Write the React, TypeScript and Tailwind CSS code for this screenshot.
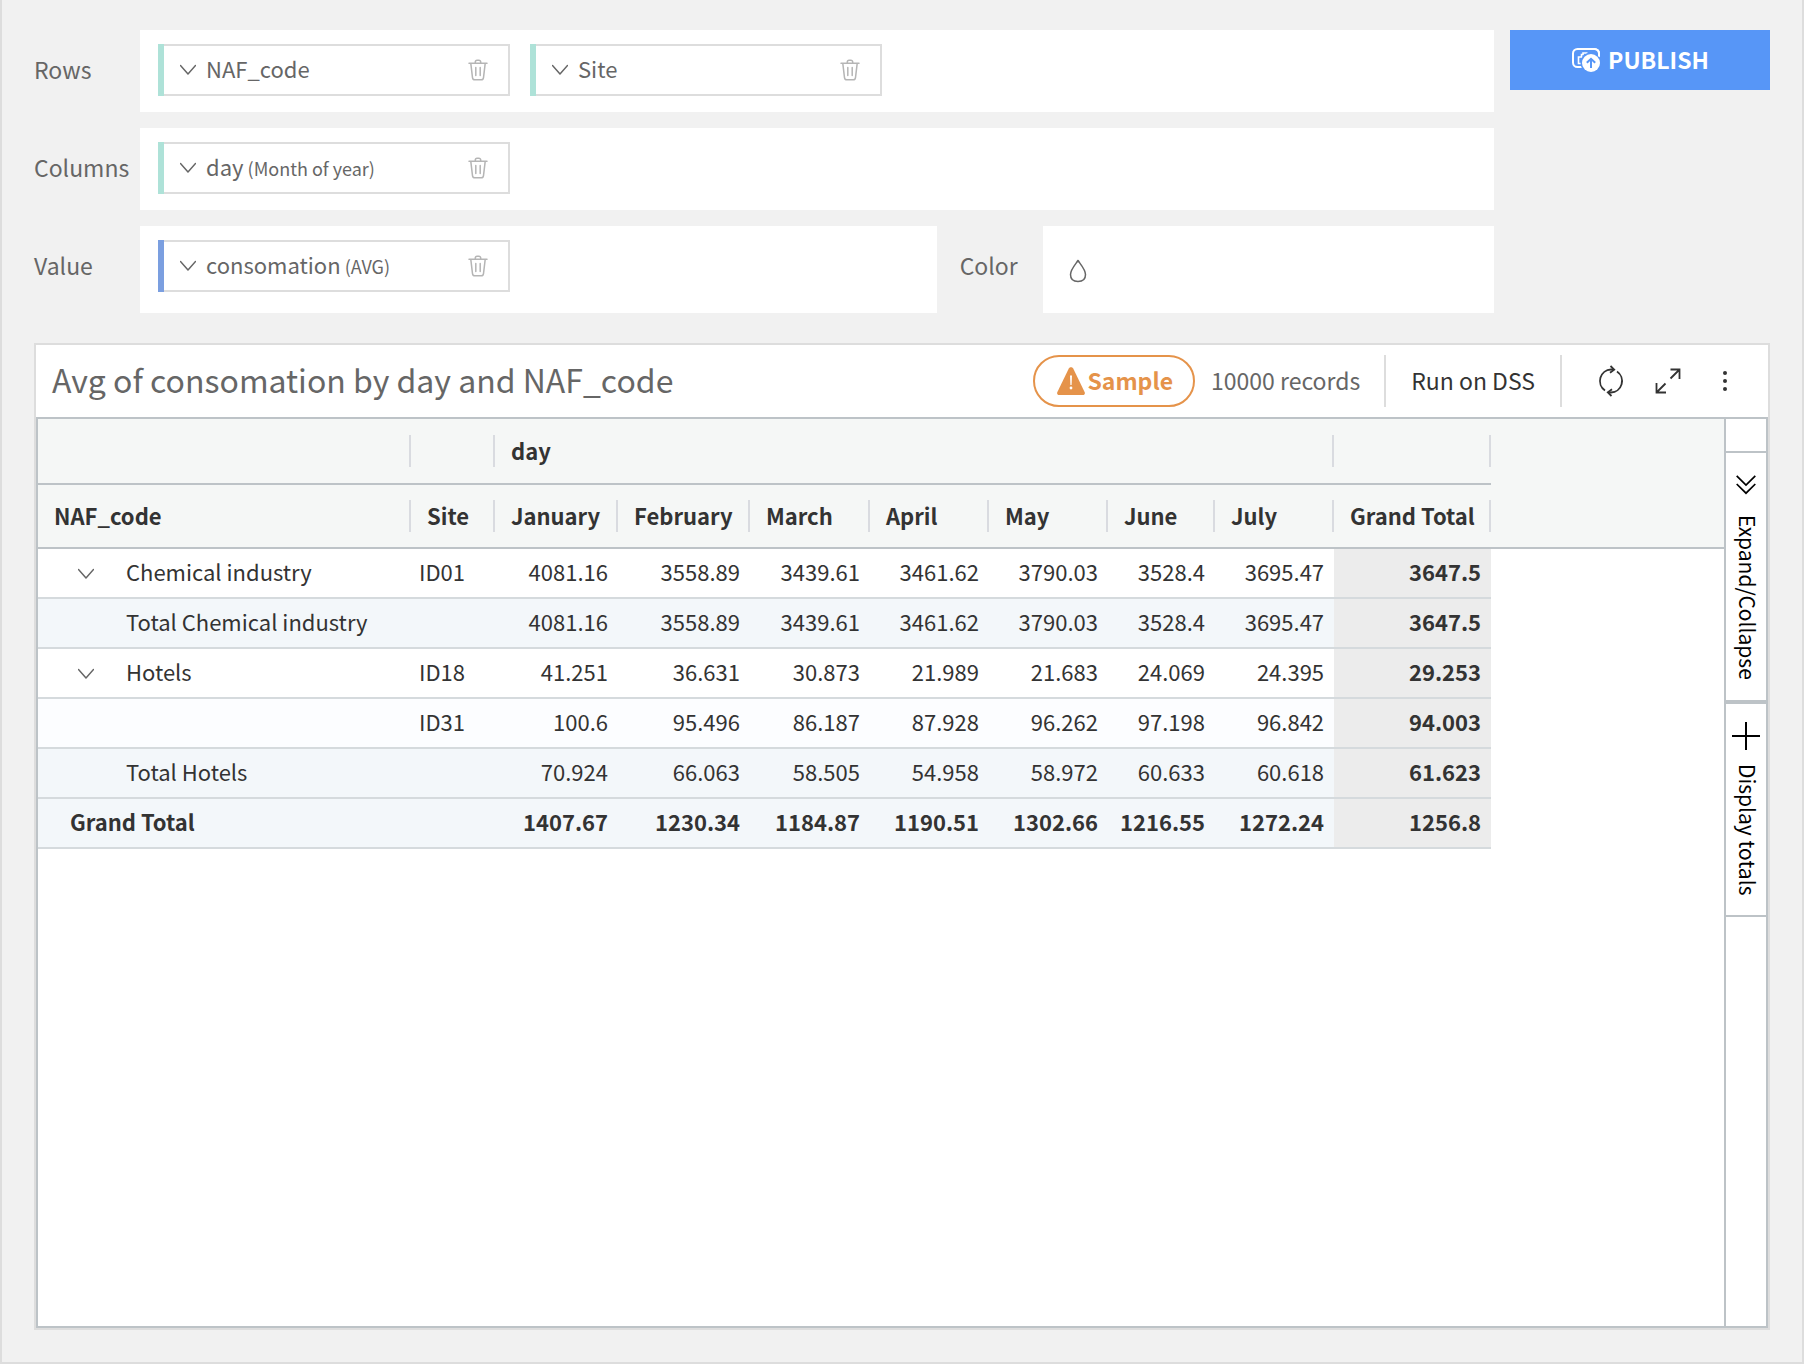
import React from "react";

type ChipProps = { name: string; detail?: string; tone: "teal" | "blue" };

function ChevronDown() {
  return (
    <svg className="h-3 w-4 shrink-0" viewBox="0 0 16 12" fill="none" stroke="#666" strokeWidth="1.5" strokeLinecap="round" strokeLinejoin="round" aria-hidden="true">
      <path d="M.5 1.5 8 10l7.5-8.5" />
    </svg>
  );
}

function TrashIcon() {
  return (
    <svg className="h-[22px] w-5" viewBox="0 0 20 22" fill="none" stroke="#b5b5b5" strokeWidth="1.5" strokeLinecap="round" strokeLinejoin="round" aria-hidden="true">
      <path d="M1 4.2h18M7.3 4V3a1.8 1.8 0 0 1 1.8-1.8h1.8A1.8 1.8 0 0 1 12.7 3v1M2.8 4.4l1.7 14.2c.2 1.5 1 2.2 2.4 2.2h6.2c1.4 0 2.2-.7 2.4-2.2l1.7-14.2M7.8 8.6v7.8M12.2 8.6v7.8" />
    </svg>
  );
}

function Chip({ name, detail, tone }: ChipProps) {
  return (
    <div className="flex w-[352px]">
      <div className={tone === "teal" ? "w-1.5 bg-[#aee2d8]" : "w-1.5 bg-[#7b9fe0]"} />
      <div className="flex h-[52px] flex-1 items-center justify-between border-2 border-l-0 border-[#ddd] pl-4 pr-5">
        <button type="button" className="flex items-center gap-2.5 text-[22px] leading-[30px]">
          <ChevronDown />
          <span className="pb-1">
            {name}
            {detail && <span className="text-[18px] leading-none"> {detail}</span>}
          </span>
        </button>
        <button type="button" aria-label={`Remove ${name}`}>
          <TrashIcon />
        </button>
      </div>
    </div>
  );
}

const months = ["January", "February", "March", "April", "May", "June", "July"];

type Row = {
  kind: "group" | "item" | "total" | "grand";
  label: string;
  site: string;
  values: string[];
  total: string;
};

const rows: Row[] = [
  { kind: "group", label: "Chemical industry", site: "ID01", values: ["4081.16", "3558.89", "3439.61", "3461.62", "3790.03", "3528.4", "3695.47"], total: "3647.5" },
  { kind: "total", label: "Total Chemical industry", site: "", values: ["4081.16", "3558.89", "3439.61", "3461.62", "3790.03", "3528.4", "3695.47"], total: "3647.5" },
  { kind: "group", label: "Hotels", site: "ID18", values: ["41.251", "36.631", "30.873", "21.989", "21.683", "24.069", "24.395"], total: "29.253" },
  { kind: "item", label: "", site: "ID31", values: ["100.6", "95.496", "86.187", "87.928", "96.262", "97.198", "96.842"], total: "94.003" },
  { kind: "total", label: "Total Hotels", site: "", values: ["70.924", "66.063", "58.505", "54.958", "58.972", "60.633", "60.618"], total: "61.623" },
  { kind: "grand", label: "Grand Total", site: "", values: ["1407.67", "1230.34", "1184.87", "1190.51", "1302.66", "1216.55", "1272.24"], total: "1256.8" },
];

const rowStyle = {
  group: "bg-white",
  item: "bg-[#fcfdff]",
  total: "bg-[#f3f7fa]",
  grand: "bg-[#f3f7fa] font-bold",
};

const headCell = "border-b-2 border-[#bdc3c7] bg-[#f5f7f6] p-0 text-left font-bold";
const headInner = "flex h-8 items-center border-r-2 border-[#d9dbe0] pb-0.5 pl-4";
const bodyCell = "h-[50px] border-b-2 border-[#d5dadd] p-0 pb-1";

function PivotTable() {
  return (
    <table className="w-full table-fixed border-separate border-spacing-0 text-[22px] leading-[30px] text-[#333]">
      <colgroup>
        <col className="w-[373px]" />
        <col className="w-[84px]" />
        <col className="w-[123px]" />
        <col className="w-[132px]" />
        <col className="w-[120px]" />
        <col className="w-[119px]" />
        <col className="w-[119px]" />
        <col className="w-[107px]" />
        <col className="w-[119px]" />
        <col className="w-[157px]" />
        <col />
      </colgroup>
      <thead>
        <tr className="h-[66px]">
          <td className={headCell}><div className={headInner} /></td>
          <td className={headCell}><div className={headInner} /></td>
          <th scope="colgroup" colSpan={7} className={headCell}><div className={headInner}>day</div></th>
          <td className={headCell}><div className={headInner} /></td>
          <td rowSpan={2} className={headCell} />
        </tr>
        <tr className="h-16">
          {["NAF_code", "Site", ...months, "Grand Total"].map((h) => (
            <th key={h} scope="col" className={headCell}>
              <div className={headInner}>{h}</div>
            </th>
          ))}
        </tr>
      </thead>
      <tbody>
        {rows.map((r, i) => (
          <tr key={i} className={rowStyle[r.kind]}>
            <th scope="row" className={`${bodyCell} text-left ${r.kind === "grand" ? "pl-8 font-bold" : "pl-10 font-normal"}`}>
              {r.kind === "grand" ? (
                r.label
              ) : (
                <div className="flex items-center gap-8">
                  <span className="w-4">
                    {r.kind === "group" && (
                      <button type="button" aria-label={`Collapse ${r.label}`} className="block pt-1.5">
                        <ChevronDown />
                      </button>
                    )}
                  </span>
                  {r.label}
                </div>
              )}
            </th>
            <td className={`${bodyCell} pl-2`}>{r.site}</td>
            {r.values.map((v, j) => (
              <td key={j} className={`${bodyCell} pr-2.5 text-right`}>{v}</td>
            ))}
            <td className={`${bodyCell} bg-[#ececec] pr-2.5 text-right font-bold`}>{r.total}</td>
            <td className="bg-white" />
          </tr>
        ))}
      </tbody>
    </table>
  );
}

function PublishIcon() {
  return (
    <svg className="h-[26px] w-[30px]" viewBox="0 0 30 26" fill="none" aria-hidden="true">
      <rect x="2" y="2" width="26" height="18" rx="4.5" stroke="#fff" strokeWidth="2" />
      <path d="M10.500 16.500H7.500V10h3V7.500h1.500V6h4.500" stroke="#fff" strokeWidth="1.600" />
      <circle cx="20" cy="16" r="10.500" fill="#5796f7" />
      <path d="M16 2h7.500A4.500 4.500 0 0 1 28 6.500v3" stroke="#fff" strokeWidth="2" />
      <circle cx="20" cy="16" r="9" fill="#fff" />
      <path d="M20 21v-9M15.800 15.800l4.200-4 4.200 4" stroke="#5796f7" strokeWidth="2" />
    </svg>
  );
}

export default function App() {
  return (
    <main className="flex min-h-screen flex-col border-2 border-t-0 border-[#ddd] bg-[#f1f1f1] px-8 pb-8 pt-[30px] font-['Noto_Sans_CJK_JP','Noto_Sans',sans-serif] text-[#666]">
      <div className="flex items-start gap-4">
        <section className="flex flex-1 flex-col gap-4 text-[23px] leading-8">
          <div className="flex">
            <h2 className="flex w-[106px] items-center pb-1">Rows</h2>
            <div className="flex flex-1 gap-5 bg-white pb-4 pl-[18px] pt-3.5">
              <Chip name="NAF_code" tone="teal" />
              <Chip name="Site" tone="teal" />
            </div>
          </div>
          <div className="flex">
            <h2 className="flex w-[106px] items-center pb-1">Columns</h2>
            <div className="flex flex-1 bg-white pb-4 pl-[18px] pt-3.5">
              <Chip name="day" detail="(Month of year)" tone="teal" />
            </div>
          </div>
          <div className="flex">
            <h2 className="flex w-[106px] items-center pb-2.5">Value</h2>
            <div className="flex flex-1">
              <div className="flex-1 bg-white pb-[21px] pl-[18px] pt-3.5">
                <Chip name="consomation" detail="(AVG)" tone="blue" />
              </div>
              <h2 className="flex w-[106px] items-center pb-2.5 pl-[23px]">Color</h2>
              <div className="flex w-1/3 items-center bg-white pl-[26px] pt-0.5">
                <button type="button" aria-label="Color options">
                  <svg className="h-6 w-[18px]" viewBox="0 0 18 24" fill="none" stroke="#666" strokeWidth="1.500" strokeLinejoin="round" aria-hidden="true">
                    <path d="M9 1.500C7.500 4 1.500 10.500 1.500 15.500c0 4.500 3 7 7.500 7s7.500-2.500 7.500-7C16.500 10.500 10.500 4 9 1.500z" />
                  </svg>
                </button>
              </div>
            </div>
          </div>
        </section>
        <button type="button" className="flex h-[60px] w-[260px] items-center justify-center gap-[7px] bg-[#5796f7] text-[23px] font-bold leading-8 text-white">
          <PublishIcon />
          <span className="pb-0.5">PUBLISH</span>
        </button>
      </div>

      <section className="mt-[30px] flex flex-1 flex-col border-2 border-[#ddd] bg-white">
        <header className="flex h-[72px] items-center">
          <h1 className="flex-1 pb-1 pl-4 text-[32px] leading-10">Avg of consomation by day and NAF_code</h1>
          <button type="button" className="flex h-[52px] items-center gap-0.5 rounded-full border-2 border-[#e5934a] pl-[22px] pr-5 text-[23px] font-bold text-[#e5934a]">
            <svg className="h-7 w-7" viewBox="0 0 28 28" aria-hidden="true">
              <path d="M11.800 1.500c1-1.700 3.400-1.700 4.400 0L27.600 25c.7 1.500 0 3-1.800 3H2.200C.4 28-.3 26.500.4 25z" fill="#e5934a" />
              <path d="M13 8.500h2l-.4 9.500h-1.200z" fill="#fff" />
              <circle cx="14" cy="21" r="1.400" fill="#fff" />
            </svg>
            <span className="pb-0.5">Sample</span>
          </button>
          <span className="pb-0.5 pl-4 pr-6 text-[23px]">10000 records</span>
          <button type="button" className="h-[52px] border-x-2 border-[#ddd] px-[25px] pb-0.5 text-[23px] text-[#333]">Run on DSS</button>
          <div className="flex items-center gap-[29px] pl-[35px] pr-[41px]">
            <button type="button" aria-label="Refresh">
              <svg className="h-8 w-7" viewBox="0 0 28 32" fill="none" stroke="#333" strokeWidth="1.800" aria-hidden="true">
                <path d="M8 25.500A11.500 11.500 0 0 1 14 4.500h3M20 6.500a11.500 11.500 0 0 1-6 21h-3" />
                <path d="M13.500 1l3.700 3.600-4.200 3.200M14.500 31l-3.700-3.600 4.200-3.200" />
              </svg>
            </button>
            <button type="button" aria-label="Full screen">
              <svg className="h-7 w-7" viewBox="0 0 28 28" fill="none" stroke="#333" strokeWidth="1.800" aria-hidden="true">
                <path d="M16.500 11.500l9-9M16.500 2.500h9v9.500M11.500 16.500l-9 9M2.500 16v9.500h9.500" />
              </svg>
            </button>
            <button type="button" aria-label="More actions" className="pl-3">
              <svg className="h-[22px] w-1" viewBox="0 0 4 22" fill="#333" aria-hidden="true">
                <circle cx="2" cy="3" r="2" />
                <circle cx="2" cy="11" r="2" />
                <circle cx="2" cy="19" r="2" />
              </svg>
            </button>
          </div>
        </header>

        <div className="flex flex-1 border-2 border-[#bdc3c7]">
          <div className="min-w-0 flex-1">
            <PivotTable />
          </div>
          <aside className="flex w-[42px] flex-col border-l-2 border-[#bdc3c7] text-[21px] leading-[30px] text-black">
            <div className="h-8" />
            <button type="button" className="flex flex-col items-center gap-5 border-y-2 border-[#bdc3c7] pb-5 pt-[22px]">
              <svg className="h-5 w-5" viewBox="0 0 20 20" fill="none" stroke="#000" strokeWidth="1.700" aria-hidden="true">
                <path d="M.7.800 10 10 19.300.800M.7 9 10 18.200 19.300 9" />
              </svg>
              <span className="pl-1 [writing-mode:vertical-rl]">Expand/Collapse</span>
            </button>
            <button type="button" className="flex flex-col items-center gap-3.5 border-y-2 border-[#bdc3c7] pb-5 pt-[18px]">
              <svg className="h-7 w-7" viewBox="0 0 28 28" fill="none" stroke="#000" strokeWidth="2" aria-hidden="true">
                <path d="M14 0v28M0 14h28" />
              </svg>
              <span className="pl-1 [writing-mode:vertical-rl]">Display totals</span>
            </button>
          </aside>
        </div>
      </section>
    </main>
  );
}
